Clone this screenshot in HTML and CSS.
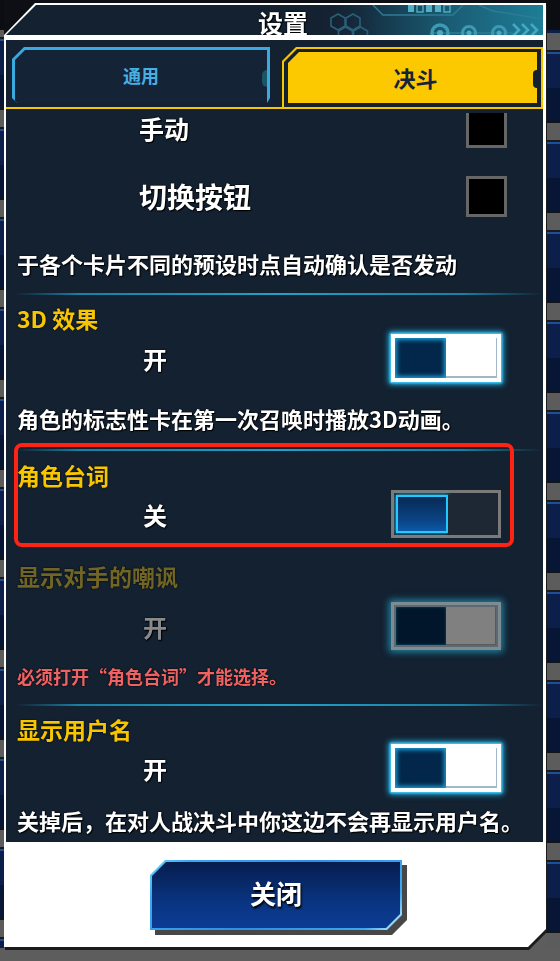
FILE: index.html
```html
<!DOCTYPE html>
<html lang="zh-CN">
<head>
<meta charset="utf-8">
<title>设置</title>
<link rel="stylesheet" href="styles.css">
</head>
<body>
<div class="screen">
  <div class="main">
    <div class="side side-left"></div>
    <div class="dialog-wrap">
      <div class="dialog">
        <header class="titlebar">
          <svg class="title-deco" width="230" height="30" viewBox="0 0 230 30" aria-hidden="true">
            <defs>
              <linearGradient id="tg" x1="0" x2="1" y1="0" y2="0">
                <stop offset="0" stop-color="#142131" stop-opacity="0"/>
                <stop offset="0.3" stop-color="#16394d"/>
                <stop offset="0.6" stop-color="#1a5d75"/>
                <stop offset="1" stop-color="#1e7d96"/>
              </linearGradient>
            </defs>
            <rect width="230" height="30" fill="url(#tg)"/>
            <g fill="none" stroke="#2b5f78" stroke-width="1.6">
              <polygon points="25,9 32,13 32,21 25,25 18,21 18,13"/>
              <polygon points="40,9 47,13 47,21 40,25 33,21 33,13"/>
              <polygon points="32.5,22 39.5,26 39.5,34 32.5,38 25.5,34 25.5,26"/>
              <polygon points="47.5,22 54.5,26 54.5,34 47.5,38 40.5,34 40.5,26"/>
            </g>
            <g fill="none" stroke="#2f7b95" stroke-width="1.4">
              <polyline points="60,0 70,10 140,10 150,0"/>
              <polyline points="166,0 180,6 230,14"/>
              <line x1="120" y1="28" x2="200" y2="28"/>
            </g>
            <g fill="#4fb0c8">
              <rect x="95" y="0" width="6" height="7"/>
              <rect x="104" y="0" width="6" height="7" fill="none" stroke="#4fb0c8" stroke-width="1.4"/>
              <rect x="113" y="0" width="6" height="7"/>
              <rect x="122" y="0" width="6" height="7"/>
              <rect x="131" y="0" width="6" height="7" fill="none" stroke="#4fb0c8" stroke-width="1.4"/>
            </g>
            <g fill="none" stroke="#3b9bb4">
              <circle cx="127" cy="28" r="8" stroke-width="3.5"/>
              <circle cx="156" cy="28" r="6.5" stroke-width="3"/>
              <circle cx="186" cy="28" r="6.5" stroke-width="3"/>
            </g>
            <g fill="#4aaac2">
              <circle cx="127" cy="28" r="3"/>
              <circle cx="156" cy="28" r="2.5"/>
              <circle cx="186" cy="28" r="2.5"/>
            </g>
            <g fill="none" stroke="#43a9c3" stroke-width="2.6">
              <polyline points="200,19 206,25 200,31"/>
              <polyline points="209,19 215,25 209,31"/>
              <polyline points="218,19 224,25 218,31"/>
            </g>
          </svg>
          <h1 class="title">设置</h1>
        </header>

        <section class="content">
          <nav class="tabs">
            <div class="tab tab-general"><div class="tab-inner">通用</div></div>
            <div class="tab tab-duel"><div class="tab-inner"><div class="tab-fill">决斗</div></div></div>
          </nav>
          <div class="tab-line"></div>

          <div class="list">
            <div class="list-inner">
              <div class="check-row row-manual">
                <span class="check-label label-small">手动</span>
                <span class="checkbox checkbox-cut"></span>
              </div>
              <div class="check-row row-switch">
                <span class="check-label">切换按钮</span>
                <span class="checkbox"></span>
              </div>
              <p class="desc desc-1">于各个卡片不同的预设时点自动确认是否发动</p>

              <div class="sep sep-1"></div>
              <h2 class="opt-title title-3d">3D 效果</h2>
              <div class="opt-row">
                <span class="opt-value">开</span>
                <span class="toggle on"><span class="t-left"></span><span class="t-right"></span></span>
              </div>
              <p class="desc desc-2">角色的标志性卡在第一次召唤时播放3D动画。</p>

              <div class="sep sep-2"></div>
              <div class="highlight">
                <h2 class="opt-title title-tight">角色台词</h2>
                <div class="opt-row">
                  <span class="opt-value">关</span>
                  <span class="toggle off"><span class="t-left"></span><span class="t-right"></span></span>
                </div>
              </div>

              <h2 class="opt-title title-dim">显示对手的嘲讽</h2>
              <div class="opt-row row-dim">
                <span class="opt-value value-dim">开</span>
                <span class="toggle disabled"><span class="t-left"></span><span class="t-right"></span></span>
              </div>
              <p class="note">必须打开“角色台词”才能选择。</p>

              <div class="sep sep-3"></div>
              <h2 class="opt-title title-tight title-name">显示用户名</h2>
              <div class="opt-row">
                <span class="opt-value">开</span>
                <span class="toggle on"><span class="t-left"></span><span class="t-right"></span></span>
              </div>
              <p class="desc desc-3">关掉后，在对人战决斗中你这边不会再显示用户名。</p>
            </div>
          </div>
        </section>

        <footer class="bottom">
          <div class="close-wrap">
            <button class="close-btn" type="button"><span class="close-inner">关闭</span></button>
          </div>
        </footer>
      </div>
    </div>
    <div class="side side-right"></div>
  </div>
  <div class="floor"></div>
</div>
</body>
</html>
```

FILE: styles.css
```css
* {
  box-sizing: border-box;
  margin: 0;
  padding: 0;
}

html,
body {
  width: 560px;
  height: 961px;
  overflow: hidden;
}

body {
  background: #5d5d5d;
  font-family: "Noto Sans CJK SC", "Noto Sans", sans-serif;
  font-weight: 700;
  color: #fff;
}

.screen {
  display: flex;
  flex-direction: column;
  height: 961px;
}

.main {
  display: flex;
  height: 948px;
  background: linear-gradient(#0d0f15 0 60%, #5d5d5d 60%);
}

.side {
  height: 948px;
  background:
    linear-gradient(#0b0d12 0 30px, transparent 30px),
    repeating-linear-gradient(180deg,
      #5c5c5c 0 17px,
      #1a1a1a 17px 19px,
      #1c4f9c 19px 21px,
      #0b1f4a 21px 55px,
      #071634 55px 88px,
      #141414 88px 90px);
}

.side-left {
  width: 4px;
  background-position: 0 0, 0 20px;
}

.side-right {
  width: 14px;
  background-position: 0 0, 0 33px;
}

.dialog-wrap {
  width: 542px;
  padding-top: 3px;
  filter: drop-shadow(1px 3px 0 #1b1b1b);
}

.dialog {
  height: 944px;
  background: #fff;
  clip-path: polygon(31px 0, 100% 0, 100% calc(100% - 18px), calc(100% - 18px) 100%, 0 100%, 0 32px);
  padding: 2px 3px 0 2px;
  display: flex;
  flex-direction: column;
}

/* ---------- title bar ---------- */
.titlebar {
  position: relative;
  height: 30px;
  flex: none;
  background: #142131;
  clip-path: polygon(30px 0, 100% 0, 100% 100%, 0 100%, 0 30px);
  display: flex;
  align-items: center;
  justify-content: center;
}

.title-deco {
  position: absolute;
  right: 0;
  top: 0;
}

.title {
  position: relative;
  font-size: 25px;
  line-height: 30px;
  margin-top: 4px;
  padding-left: 17px;
  font-weight: 700;
  color: #fff;
  text-shadow: 0 0 2px #000, 1px 1px 1px #000;
}

/* ---------- content ---------- */
.content {
  margin-top: 5px;
  height: 802px;
  flex: none;
  background: #132131;
  display: flex;
  flex-direction: column;
}

.tabs {
  display: flex;
  align-items: flex-start;
  gap: 12px;
  padding: 7px 0 0 6px;
  height: 67px;
}

.tab {
  position: relative;
}

.tab-general {
  width: 258px;
  height: 56px;
  background: #3aa9e0;
  clip-path: polygon(12px 0, 100% 0, 100% calc(100% - 5px), calc(100% - 3px) 100%, 5px 100%, 0 calc(100% - 5px), 0 12px);
  padding: 3px 3px 0 3px;
}

.tab-general .tab-inner {
  height: 100%;
  background: #152337;
  clip-path: polygon(10px 0, 100% 0, 100% 100%, 0 100%, 0 10px);
  display: flex;
  align-items: center;
  justify-content: center;
  font-size: 18px;
  color: #47b0e3;
  padding-bottom: 3px;
}

.tab-general::before {
  content: "";
  position: absolute;
  left: 3px;
  top: 33px;
  width: 4px;
  height: 14px;
  background: #1f6d8c;
  border-radius: 0 4px 4px 0;
}

.tab-general::after {
  content: "";
  position: absolute;
  right: 3px;
  top: 23px;
  width: 5px;
  height: 17px;
  background: #1a5566;
  border-radius: 5px 0 0 5px;
}

.tab-duel {
  flex: 1;
  height: 60px;
  background: #f7c600;
  clip-path: polygon(14px 0, 100% 0, 100% 100%, 0 100%, 0 14px);
  padding: 2px 2px 0 2px;
}

.tab-duel .tab-inner {
  height: 100%;
  background: #132131;
  clip-path: polygon(13px 0, 100% 0, 100% 100%, 0 100%, 0 13px);
  padding: 3px 4px 4px 4px;
}

.tab-fill {
  position: relative;
  height: 100%;
  background: #fcc800;
  clip-path: polygon(11px 0, 100% 0, 100% 100%, 0 100%, 0 11px);
  display: flex;
  align-items: center;
  justify-content: center;
  font-size: 22px;
  color: #16243a;
  padding-left: 6px;
  padding-bottom: 1px;
}

.tab-fill::after {
  content: "";
  position: absolute;
  right: 0;
  top: 18px;
  width: 4px;
  height: 18px;
  background: #132131;
  border-radius: 4px 0 0 4px;
}

.tab-line {
  height: 2px;
  flex: none;
  background: #f7c600;
  margin-bottom: 4px;
}

.list {
  flex: 1;
  overflow: hidden;
}

.list-inner {
  display: flex;
  flex-direction: column;
}

.check-row {
  display: flex;
  align-items: center;
  justify-content: space-between;
  height: 41px;
  padding: 0 36px 0 133px;
}

.row-manual {
  height: 35px;
  align-items: flex-start;
}

.row-manual .check-label {
  margin-top: 2px;
}

.row-switch {
  margin-top: 28px;
}

.check-label {
  font-size: 28px;
  line-height: 1.2;
  text-shadow: 0 0 2px #000, 1px 1px 1px #000;
}

.check-label.label-small {
  font-size: 25px;
  line-height: 26px;
}

.checkbox {
  width: 41px;
  height: 41px;
  background: #000;
  border: 3px solid #666;
}

.checkbox.checkbox-cut {
  height: 35px;
  border-top: 0;
}

.desc {
  font-size: 22px;
  line-height: 30px;
  padding-left: 11px;
  white-space: nowrap;
  text-shadow: 0 0 2px #000, 1px 1px 1px #000;
}

.desc-1 {
  margin-top: 31px;
}

.desc-2 {
  margin-top: 21px;
}

.desc-3 {
  margin-top: 13px;
}

.sep {
  height: 2px;
  margin-left: 9px;
  background: linear-gradient(90deg, rgba(30, 130, 170, 0) 0, #1a7fa3 12%, #23a0c8 50%, #1a7fa3 85%, rgba(30, 130, 170, 0) 100%);
}

.sep-1 {
  margin-top: 15px;
}

.sep-2 {
  margin-top: 16px;
}

.sep-3 {
  margin-top: 15px;
}

.opt-title {
  font-size: 23px;
  line-height: 30px;
  font-weight: 700;
  color: #f7c600;
  padding-left: 11px;
  text-shadow: 0 0 2px #000;
}

.title-3d {
  margin-top: 8px;
}

.title-tight {
  line-height: 28px;
}

.highlight {
  position: relative;
  margin-top: 10px;
}

.highlight::after {
  content: "";
  position: absolute;
  top: -18px;
  bottom: -9px;
  left: 8px;
  right: 29px;
  border: 4px solid #ff2314;
  border-radius: 8px;
  pointer-events: none;
}

.title-dim {
  margin-top: 23px;
  color: #716526;
}

.title-name {
  margin-top: 9px;
}

.opt-row {
  display: flex;
  align-items: center;
  justify-content: space-between;
  height: 49px;
  padding: 0 42px 0 137px;
}

.row-dim {
  margin-top: 10px;
}

.opt-value {
  font-size: 24px;
  line-height: 1;
  padding-top: 2px;
  text-shadow: 0 0 2px #000, 1px 1px 1px #000;
}

.value-dim {
  color: #8a8a8a;
}

.note {
  margin-top: 13px;
  font-size: 18px;
  line-height: 26px;
  padding-left: 11px;
  color: #f06262;
  text-shadow: 0 0 2px #000;
}

/* ---------- toggles ---------- */
.toggle {
  width: 110px;
  height: 48px;
  display: flex;
}

.t-left,
.t-right {
  flex: 1;
}

.toggle.on {
  border: 4px solid #fff;
  background: #fff;
  box-shadow: 0 0 6px 2px #25c6ff, 0 0 2px 1px #8ae6ff;
}

.toggle.on .t-left {
  background: #03274a;
  box-shadow: inset 0 0 4px 2px #1b9ed8;
}

.toggle.on .t-right {
  background: #fff;
  box-shadow: inset -1px -2px 0 #9fb8c4;
}

.toggle.off {
  border: 3px solid #7a7a7a;
  background: #1e2834;
  padding: 2px 3px 2px 2px;
}

.toggle.off .t-left {
  background: linear-gradient(#072a55, #0a4585 70%, #0b5aa8);
  border: 2px solid #22c8ff;
  box-shadow: 0 0 4px #22c8ff, 2px 2px 0 #0c141c;
}

.toggle.off .t-right {
  background: #1e2834;
}

.toggle.disabled {
  border: 3px solid #7f8b90;
  background: #5a6a70;
  box-shadow: 0 0 7px 2px rgba(36, 170, 205, 0.75);
  padding: 2px;
}

.toggle.disabled .t-left {
  background: #01162a;
  box-shadow: inset 0 0 3px #0a5a78;
}

.toggle.disabled .t-right {
  background: #808080;
  box-shadow: inset -1px -1px 0 #5a5a5a;
}

/* ---------- bottom ---------- */
.bottom {
  flex: 1;
  display: flex;
  justify-content: center;
  align-items: flex-start;
  padding-top: 18px;
  padding-left: 3px;
}

.close-wrap {
  filter: drop-shadow(5px 5px 0 #474747);
}

.close-btn {
  display: block;
  width: 252px;
  height: 70px;
  border: 0;
  padding: 2px;
  font: inherit;
  background: linear-gradient(135deg, #6ad8ff 0, #3aa8f0 12%, #2f8de6 50%, #3aa8f0 88%, #d8f6ff 100%);
  clip-path: polygon(15px 0, 100% 0, 100% calc(100% - 15px), calc(100% - 15px) 100%, 0 100%, 0 15px);
}

.close-inner {
  display: flex;
  height: 100%;
  align-items: center;
  justify-content: center;
  padding-bottom: 6px;
  background: linear-gradient(#061d4e, #0a3480 60%, #0b3c94);
  clip-path: polygon(14px 0, 100% 0, 100% calc(100% - 14px), calc(100% - 14px) 100%, 0 100%, 0 14px);
  color: #fff;
  font-size: 26px;
  font-weight: 700;
  text-shadow: 1px 2px 2px #000;
}

.floor {
  height: 13px;
  background: #5d5d5d;
}
```
